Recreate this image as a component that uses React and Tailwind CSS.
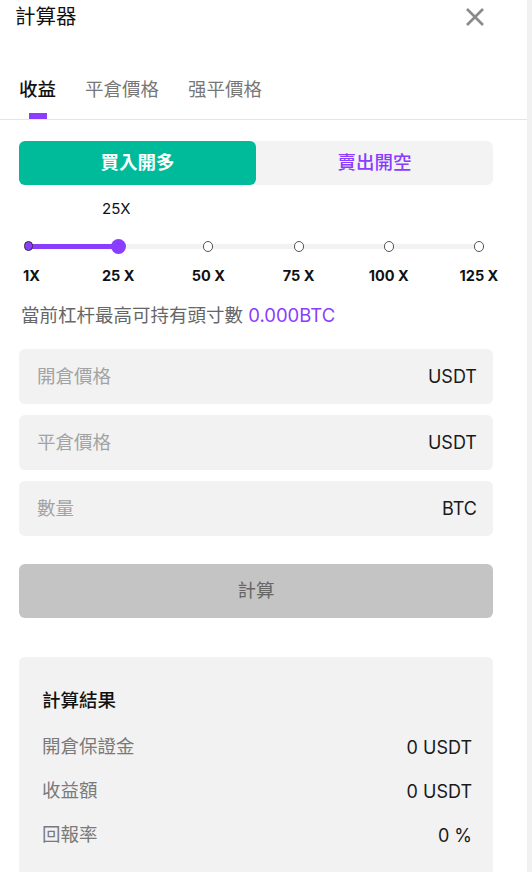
import { useState } from "react";

/*
  Contract calculator panel
  - tabs: 收益 / 平倉價格 / 强平價格
  - long / short switch, leverage slider, inputs, result card
*/

const FONT = { fontFamily: 'Inter, "Noto Sans CJK TC", "Noto Sans", sans-serif' };

const STOPS = ["1X", "25 X", "50 X", "75 X", "100 X", "125 X"];

const Field = ({ label, unit }) => (
  <div className="h-[55px] rounded-md bg-[#f2f2f2] flex items-center justify-between pl-[18px] pr-[16px]">
    <span className="text-[18.5px] text-[#a3a3a3]">{label}</span>
    <span className="text-[18px] text-[#1a1a1a]">{unit}</span>
  </div>
);

const ResultRow = ({ label, value }) => (
  <div className="h-11 flex items-center justify-between">
    <span className="text-[18.5px] text-[#7a7a7a]">{label}</span>
    <span className="text-[18px] text-[#1a1a1a]">{value}</span>
  </div>
);

export default function App() {
  const [tab] = useState(0);
  const level = 1;

  return (
    <div className="w-[532px] h-[872px] overflow-hidden bg-white flex items-start" style={FONT}>
      <div className="w-[527px] shrink-0">

        {/* header */}
        <div className="h-[34px] flex items-center justify-between pl-[15px] pr-[42px]">
          <h1 className="text-[20.5px] leading-[28px] text-[#111]">計算器</h1>
          <svg width="20" height="20" viewBox="0 0 20 20" className="text-[#8a8a8a]">
            <path d="M2 2 L18 18 M18 2 L2 18" stroke="currentColor" strokeWidth="2.6" />
          </svg>
        </div>

        {/* tabs */}
        <div className="pt-[43px] border-b border-[#e6e6e6] flex gap-[29px] pl-[19px]">
          {["收益", "平倉價格", "强平價格"].map((t, i) => (
            <div key={t} className="flex flex-col items-center">
              <span
                className={`text-[18.5px] leading-[24px] ${
                  i === tab ? "text-[#111] font-medium" : "text-[#777]"
                }`}
              >
                {t}
              </span>
              <div className={`mt-[12px] h-[6px] w-[18px] ${i === tab ? "bg-[#8b3dff]" : ""}`}></div>
            </div>
          ))}
        </div>

        <div className="pl-[19px] pr-[34px]">
          {/* long / short */}
          <div className="mt-[21px] h-[44px] rounded-md bg-[#f3f3f3] flex">
            <div className="flex-1 rounded-md bg-[#00bb9a] flex items-center justify-center text-white text-[18.5px] font-bold">
              買入開多
            </div>
            <div className="flex-1 flex items-center justify-center text-[#8b3dff] text-[18.5px] font-medium">
              賣出開空
            </div>
          </div>
        </div>

        {/* current leverage */}
        <div className="mt-[14px] pl-[102px] text-[15px] leading-[20px] text-[#111]">25X</div>

        {/* slider */}
        <div className="mt-[19px] ml-[20px] w-[467px] h-4 relative">
          <div className="absolute left-[8px] right-[8px] top-[6px] h-[5px] rounded-full bg-[#f2f2f2]"></div>
          <div className="absolute left-[8px] w-[90px] top-[6px] h-[5px] rounded-full bg-[#8b3dff]"></div>
          <div className="relative h-4 flex justify-between">
            {STOPS.map((s, i) => (
              <div key={s} className="w-4 h-4 flex items-center justify-center">
                {i === 0 ? (
                  <div className="w-[9px] h-[10px] rounded-full bg-[#8b3dff] border border-[#333]"></div>
                ) : i === level ? (
                  <div className="w-[15px] h-[15px] rounded-full bg-[#8b3dff]"></div>
                ) : (
                  <div className="w-[10px] h-[11px] rounded-full bg-white border border-[#555]"></div>
                )}
              </div>
            ))}
          </div>
        </div>

        {/* stop labels, centred under each stop */}
        <div className="mt-[12px] ml-[8px] w-[491px] flex justify-between">
          {STOPS.map((s, i) => (
            <span
              key={s}
              className={`w-10 text-[14.5px] leading-[20px] font-bold text-[#111] whitespace-nowrap ${
                i === 0 ? "pl-[15px] text-left" : "text-center"
              }`}
            >
              {s}
            </span>
          ))}
        </div>

        <div className="pl-[19px] pr-[34px]">
          {/* max position */}
          <p className="mt-[16px] pl-[2px] text-[18.5px] leading-[26px] text-[#666]">
            當前杠杆最高可持有頭寸數 <span className="text-[#8b3dff]">0.000BTC</span>
          </p>

          {/* inputs */}
          <div className="mt-[21px] flex flex-col gap-[11px]">
            <Field label="開倉價格" unit="USDT" />
            <Field label="平倉價格" unit="USDT" />
            <Field label="數量" unit="BTC" />
          </div>

          {/* calculate */}
          <button className="mt-[28px] w-full h-[54px] rounded-md bg-[#c4c4c4] text-[18.5px] text-[#666]">
            計算
          </button>

          {/* result */}
          <div className="mt-[39px] rounded-md bg-[#f2f2f2] pt-[30px] pl-[23px] pr-[21px] pb-[40px]">
            <h3 className="text-[18.5px] leading-[26px] font-medium text-[#111]">計算結果</h3>
            <div className="mt-[12px]">
              <ResultRow label="開倉保證金" value="0 USDT" />
              <ResultRow label="收益額" value="0 USDT" />
              <ResultRow label="回報率" value="0 %" />
            </div>
          </div>
        </div>
      </div>

      {/* scrollbar track */}
      <div className="w-[5px] h-full bg-[#f1f1f1]"></div>
    </div>
  );
}
